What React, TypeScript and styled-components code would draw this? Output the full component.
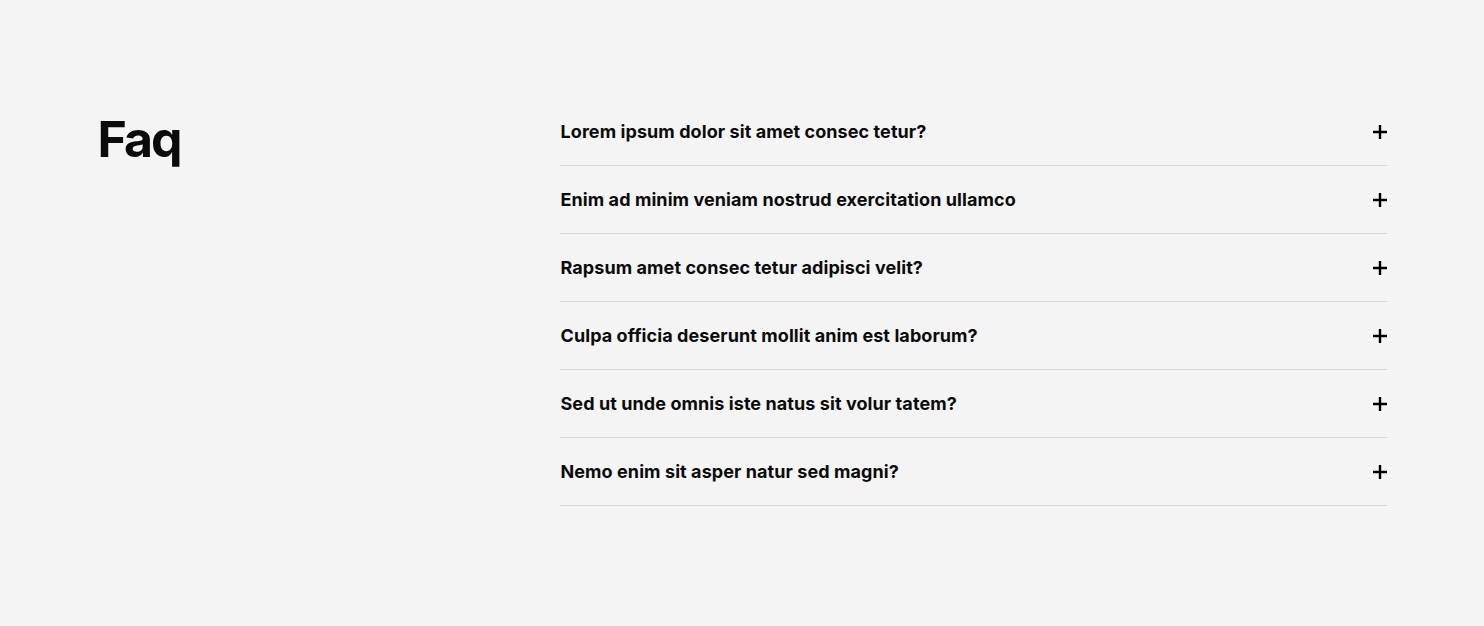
import React from "react";
import styled, { createGlobalStyle } from "styled-components";

const Global = createGlobalStyle`
  html, body { margin: 0; padding: 0; background: #f4f4f4; }
  body { font-family: Inter, "Noto Sans", sans-serif; color: #0b0b0b; }
`;

const Section = styled.section`
  width: 1289px;
  margin: 0 auto;
  padding-top: 98px;
  display: grid;
  grid-template-columns: 462px 1fr;
`;

const Title = styled.h2`
  margin: 0;
  padding-top: 16px;
  font-size: 50px;
  font-weight: 700;
  letter-spacing: -2px;
  line-height: 1;
`;

const List = styled.div`
  display: flex;
  flex-direction: column;
`;

const Row = styled.div`
  height: 68px;
  display: flex;
  align-items: center;
  justify-content: space-between;
  border-bottom: 1px solid #d8d8d8;
  box-sizing: border-box;
  padding: 0 0 0 1px;
`;

const Question = styled.span`
  font-size: 18px;
  font-weight: 700;
  letter-spacing: 0.08px;
`;

const Plus = styled.svg`
  width: 14px;
  height: 14px;
  margin-right: 0;
`;

const items = [
  "Lorem ipsum dolor sit amet consec tetur?",
  "Enim ad minim veniam nostrud exercitation ullamco",
  "Rapsum amet consec tetur adipisci velit?",
  "Culpa officia deserunt mollit anim est laborum?",
  "Sed ut unde omnis iste natus sit volur tatem?",
  "Nemo enim sit asper natur sed magni?",
];

export default function App() {
  return (
    <>
      <Global />
      <Section>
        <Title>Faq</Title>
        <List>
          {items.map((q) => (
            <Row key={q}>
              <Question>{q}</Question>
              <Plus viewBox="0 0 14 14">
                <path d="M7 0v14M0 7h14" stroke="#000" strokeWidth="2.4" />
              </Plus>
            </Row>
          ))}
        </List>
      </Section>
    </>
  );
}
